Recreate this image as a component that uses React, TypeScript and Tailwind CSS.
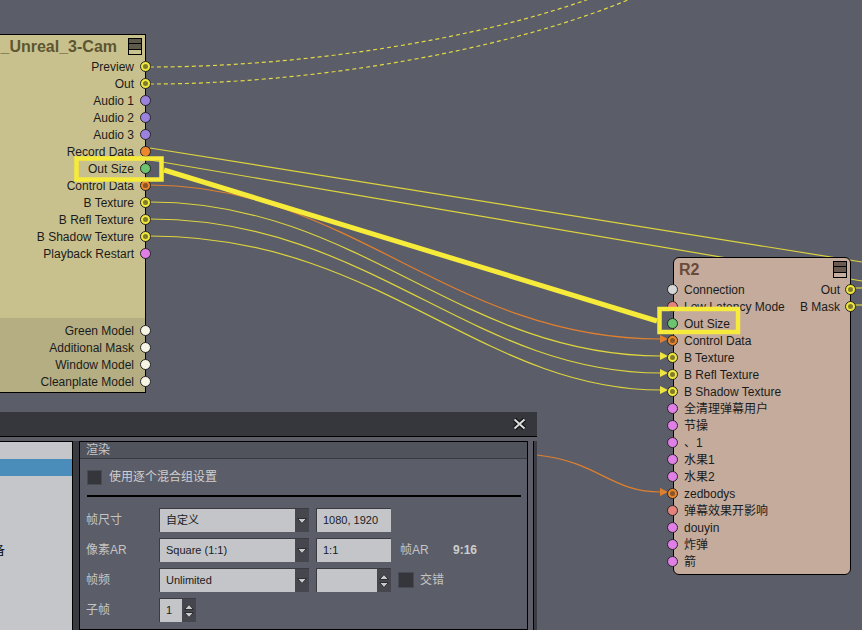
import React from "react";

type Kind =
  | "yellow"
  | "purple"
  | "orange"
  | "orangeRing"
  | "green"
  | "pink"
  | "white"
  | "gray"
  | "salmon";

const portBg: Record<Kind, string> = {
  yellow: "bg-[#f0e83e]",
  purple: "bg-[#9a82de]",
  orange: "bg-[#ee882e]",
  orangeRing: "bg-[#e8862e]",
  green: "bg-[#6dc46f]",
  pink: "bg-[#e07fe6]",
  white: "bg-[#f6f4e4]",
  gray: "bg-[#d6d6d6]",
  salmon: "bg-[#e4827c]",
};

function Port({ kind, side }: { kind: Kind; side: "left" | "right" }) {
  const ring = kind === "yellow" || kind === "orangeRing";
  return (
    <span
      className={[
        "absolute top-[3px] w-[11px] h-[11px] rounded-full border border-[#252525] flex items-center justify-center",
        side === "right" ? "right-[-6px]" : "left-[-7px]",
        portBg[kind],
      ].join(" ")}
    >
      {ring && (
        <span
          className={`w-[5px] h-[5px] rounded-full ${
            kind === "yellow" ? "bg-[#807b2a]" : "bg-[#8a5424]"
          }`}
        />
      )}
    </span>
  );
}

function MenuIcon({ rose }: { rose?: boolean }) {
  const dark = rose ? "bg-[#6b5a52]" : "bg-[#5d5a4a]";
  const light = rose ? "bg-[#c6ad9f]" : "bg-[#cbc38f]";
  return (
    <div className="w-[14px] h-[17px] border border-black bg-black flex flex-col gap-[1px]">
      <div className={`flex-1 ${dark}`} />
      <div className={`flex-1 ${dark}`} />
      <div className={`flex-1 ${light}`} />
    </div>
  );
}

const leftOutputs: [string, Kind][] = [
  ["Preview", "yellow"],
  ["Out", "yellow"],
  ["Audio 1", "purple"],
  ["Audio 2", "purple"],
  ["Audio 3", "purple"],
  ["Record Data", "orange"],
  ["Out Size", "green"],
  ["Control Data", "orangeRing"],
  ["B Texture", "yellow"],
  ["B Refl Texture", "yellow"],
  ["B Shadow Texture", "yellow"],
  ["Playback Restart", "pink"],
];

const leftModels = ["Green Model", "Additional Mask", "Window Model", "Cleanplate Model"];

const r2Inputs: [string, Kind][] = [
  ["Connection", "gray"],
  ["Low Latency Mode", "salmon"],
  ["Out Size", "green"],
  ["Control Data", "orangeRing"],
  ["B Texture", "yellow"],
  ["B Refl Texture", "yellow"],
  ["B Shadow Texture", "yellow"],
  ["全清理弹幕用户", "pink"],
  ["节操", "pink"],
  ["、1", "pink"],
  ["水果1", "pink"],
  ["水果2", "pink"],
  ["zedbodys", "orangeRing"],
  ["弹幕效果开影响", "salmon"],
  ["douyin", "pink"],
  ["炸弹", "pink"],
  ["箭", "pink"],
];

const r2Outputs = ["Out", "B Mask"];

function Wires() {
  const thin = "#ddd43e";
  const orange = "#e0802e";
  const arrow = (y: number, c: string) => (
    <polygon key={`a${y}`} points={`660,${y - 4} 668,${y} 660,${y + 4}`} fill={c} />
  );
  return (
    <svg className="absolute inset-0" width="862" height="630" viewBox="0 0 862 630">
      <g fill="none" strokeWidth="1.2">
        <path d="M150,67 C300,67 480,40 600,-5" stroke="#e2d944" strokeDasharray="4 3" />
        <path d="M150,84 C300,84 500,55 640,-5" stroke="#e2d944" strokeDasharray="4 3" />
        <path d="M150,148 L862,262" stroke={thin} />
        <path d="M150,160 L862,281" stroke={thin} />
        <path d="M150,185 C350,185 450,339 661,339" stroke={orange} />
        <path d="M150,202 C360,202 460,356 661,356" stroke={thin} />
        <path d="M150,219 C370,219 470,373 661,373" stroke={thin} />
        <path d="M150,236 C380,236 480,390 661,390" stroke={thin} />
        <path d="M537,455 C600,462 610,492 661,492" stroke={orange} />
        <path d="M855,288 L862,288" stroke={thin} />
        <path d="M855,305 L862,305" stroke={thin} />
      </g>
      {arrow(339, orange)}
      {arrow(356, "#efe540")}
      {arrow(373, "#efe540")}
      {arrow(390, "#efe540")}
      {arrow(492, orange)}
    </svg>
  );
}

function Highlights() {
  return (
    <svg className="absolute inset-0 pointer-events-none" width="862" height="630" viewBox="0 0 862 630">
      <g fill="none" stroke="#f6ea3a" strokeWidth="4.5">
        <rect x="76.5" y="158.5" width="85" height="21" />
        <rect x="659.5" y="309" width="78.5" height="23" />
        <path d="M164,170 L657,321" strokeWidth="5" />
      </g>
    </svg>
  );
}

function DropArrow() {
  return (
    <svg width="10" height="6" viewBox="0 0 10 6">
      <polygon points="0.5,0.5 9.5,0.5 5,5.5" fill="#c9c9cc" stroke="#2c2d31" strokeWidth="1" />
    </svg>
  );
}

function SpinArrows() {
  return (
    <svg width="10" height="14" viewBox="0 0 10 14">
      <polygon points="5,0.5 9.5,5.5 0.5,5.5" fill="#c9c9cc" stroke="#2c2d31" strokeWidth="1" />
      <polygon points="0.5,8.5 9.5,8.5 5,13.5" fill="#c9c9cc" stroke="#2c2d31" strokeWidth="1" />
    </svg>
  );
}

function Field({ w, children }: { w: string; children?: React.ReactNode }) {
  return (
    <div
      className={`${w} h-[24px] bg-[#c4c5c9] border-t border-l border-[#3a3b40] flex items-center pl-[6px] text-[11px] text-[#1a1a22]`}
    >
      {children}
    </div>
  );
}

function Combo({ value }: { value: string }) {
  return (
    <div className="flex">
      <Field w="w-[136px]">{value}</Field>
      <div className="w-[14px] h-[24px] bg-[#45464e] border-t border-[#3a3b40] flex items-center justify-center">
        <DropArrow />
      </div>
    </div>
  );
}

function Dialog() {
  return (
    <div className="absolute left-0 top-[412px] w-[537px] h-[218px] flex flex-col bg-[#5c5d67]">
      <div className="h-[25px] bg-[#36373d] border-b border-black flex items-center justify-end pr-[10px]">
        <svg width="15" height="14" viewBox="0 0 15 14">
          <path d="M2.5,2.5 L12.5,11.5 M12.5,2.5 L2.5,11.5" stroke="#151515" strokeWidth="4.5" />
          <path d="M2.5,2.5 L12.5,11.5 M12.5,2.5 L2.5,11.5" stroke="#dcdcdc" strokeWidth="2" />
        </svg>
      </div>
      <div className="flex-1 flex pt-[4px] min-h-0">
        {/* left list */}
        <div className="w-[73px] bg-[#c5c6ca] border-t border-r border-black overflow-hidden">
          <div className="h-[17px]" />
          <div className="h-[17px] bg-[#4a8dbb]" />
          <div className="mt-[68px] ml-[-7px] text-[12px] leading-[14px] text-black">备</div>
        </div>
        <div className="w-[6px] bg-[#3a3b41]" />
        {/* render group */}
        <div className="w-[449px] border border-black bg-[#5b5d68] flex flex-col">
          <div className="h-[17px] bg-[#50525c] border-b border-[#393a41] pl-[6px] flex items-center text-[12px] text-[#c9c9c9]">
            渲染
          </div>
          <div className="mt-[9px] pl-[7px] flex items-center gap-[7px]">
            <div className="w-[15px] h-[15px] bg-[#35363c] border border-[#4a4b52]" />
            <span className="text-[12px] text-[#d0d0d0]">使用逐个混合组设置</span>
          </div>
          <div className="mt-[9px] ml-[7px] w-[434px] h-[2px] bg-black" />
          <div className="mt-[11px] pl-[6px] flex flex-col gap-[6px] text-[12px] text-[#c4c4c4]">
            <div className="flex items-center">
              <span className="w-[73px]">帧尺寸</span>
              <Combo value="自定义" />
              <div className="ml-[7px]">
                <Field w="w-[75px]">1080, 1920</Field>
              </div>
            </div>
            <div className="flex items-center">
              <span className="w-[73px]">像素AR</span>
              <Combo value="Square (1:1)" />
              <div className="ml-[7px]">
                <Field w="w-[75px]">1:1</Field>
              </div>
              <span className="ml-[9px] w-[53px]">帧AR</span>
              <span className="font-bold text-[#cdcdcd]">9:16</span>
            </div>
            <div className="flex items-center">
              <span className="w-[73px]">帧频</span>
              <Combo value="Unlimited" />
              <div className="ml-[7px] flex">
                <Field w="w-[61px]" />
                <div className="w-[14px] h-[24px] bg-[#45464e] border-t border-[#3a3b40] flex items-center justify-center">
                  <SpinArrows />
                </div>
              </div>
              <div className="ml-[7px] w-[16px] h-[16px] bg-[#35363c] border border-[#4a4b52]" />
              <span className="ml-[6px]">交错</span>
            </div>
            <div className="flex items-center">
              <span className="w-[73px]">子帧</span>
              <div className="flex">
                <Field w="w-[23px]">1</Field>
                <div className="w-[14px] h-[24px] bg-[#45464e] border-t border-[#3a3b40] flex items-center justify-center">
                  <SpinArrows />
                </div>
              </div>
            </div>
          </div>
        </div>
        <div className="w-[5px]" />
        <div className="w-[4px] bg-[#3c3d44] border-l border-black" />
      </div>
    </div>
  );
}

export default function App() {
  return (
    <div className="relative w-[862px] h-[630px] overflow-hidden bg-[#5b5d69] font-['Liberation_Sans','Noto_Sans_CJK_SC',sans-serif]">
      <Wires />

      {/* camera node (cut off at left) */}
      <div className="absolute left-[-61px] top-[34px] w-[207px] h-[359px] border border-black bg-[#c9c18d] flex flex-col">
        <div className="h-[23px] flex items-center justify-end gap-[11px] pr-[3px]">
          <span className="text-[16px] font-bold text-[#5d5632] leading-none">_Unreal_3-Cam</span>
          <MenuIcon />
        </div>
        <div>
          {leftOutputs.map(([label, kind]) => (
            <div key={label} className="relative h-[17px] flex items-center justify-end pr-[11px] text-[12px] text-[#1b1b1b]">
              {label}
              <Port kind={kind} side="right" />
            </div>
          ))}
        </div>
        <div className="flex-1" />
        <div className="h-[74px] bg-[#b5ae83] pt-[4px]">
          {leftModels.map((label) => (
            <div key={label} className="relative h-[17px] flex items-center justify-end pr-[11px] text-[12px] text-[#1b1b1b]">
              {label}
              <Port kind="white" side="right" />
            </div>
          ))}
        </div>
      </div>

      {/* R2 node */}
      <div className="absolute left-[673px] top-[257px] w-[178px] h-[318px] rounded-[6px] border border-black bg-[#c4ab9c] flex flex-col">
        <div className="h-[23px] flex items-center justify-between pl-[5px] pr-[3px]">
          <span className="text-[16px] font-bold text-[#6b4a3a] leading-none">R2</span>
          <MenuIcon rose />
        </div>
        {r2Inputs.map(([label, kind], i) => (
          <div key={label} className="relative h-[17px] flex items-center justify-between pl-[10px] pr-[10px] text-[12px] text-[#1b1b1b]">
            <span>{label}</span>
            {r2Outputs[i] && <span>{r2Outputs[i]}</span>}
            <Port kind={kind} side="left" />
            {r2Outputs[i] && <Port kind="yellow" side="right" />}
          </div>
        ))}
      </div>

      <Highlights />
      <Dialog />
    </div>
  );
}
